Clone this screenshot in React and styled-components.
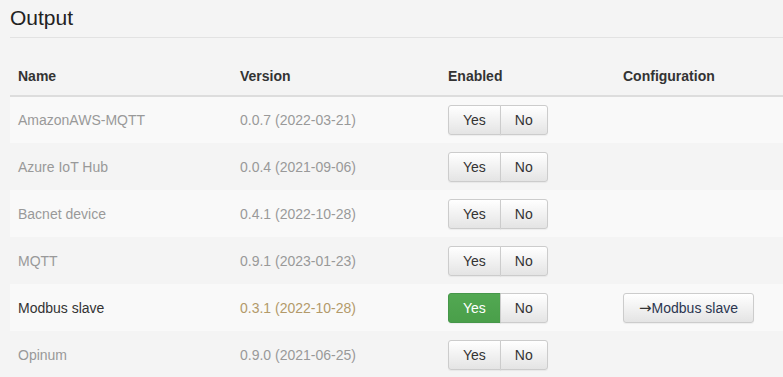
import React from "react";
import styled, { createGlobalStyle } from "styled-components";

const GlobalStyle = createGlobalStyle`
  body {
    margin: 0;
    background: #f4f4f4;
    font-family: "Liberation Sans", Arial, sans-serif;
    font-size: 14px;
    color: #333;
  }
  * {
    box-sizing: border-box;
  }
`;

const Page = styled.div`
  padding: 0 0 0 10px;
`;

const Title = styled.h2`
  margin: 0;
  padding: 6px 0 7px;
  font-size: 21px;
  font-weight: 400;
  line-height: 24px;
  color: #222;
  border-bottom: 1px solid #e2e2e2;
`;

const Table = styled.table`
  width: 100%;
  margin-top: 20px;
  border-collapse: collapse;
  table-layout: fixed;
`;

const Th = styled.th`
  text-align: left;
  padding: 8px 8px 9px;
  line-height: 20px;
  font-weight: 700;
  font-size: 14px;
  color: #333;
  border-bottom: 2px solid #dddddd;
  width: ${(p) => p.$w || "auto"};
`;

const Row = styled.tr`
  background: ${(p) => (p.$striped ? "#f9f9f9" : "transparent")};
  & + & td {
    border-top: 1px solid #dddddd;
  }
`;

const Td = styled.td`
  padding: 8px;
  line-height: 20px;
  height: 47px;
  vertical-align: middle;
  color: ${(p) => p.$color || "#999"};
`;

const Group = styled.div`
  display: inline-flex;
`;

const Btn = styled.button`
  height: 30px;
  padding: 0 14px;
  font-family: inherit;
  font-size: 14px;
  color: ${(p) => (p.$on ? "#fff" : "#333")};
  background: ${(p) =>
    p.$on
      ? "linear-gradient(#52a852, #4a9f4a)"
      : "linear-gradient(#ffffff, #e4e4e4)"};
  border: 1px solid ${(p) => (p.$on ? "#46974a" : "#cccccc")};
  box-shadow: 0 1px 1px rgba(0, 0, 0, 0.05);
  cursor: pointer;
  &:first-child {
    border-radius: 3px 0 0 3px;
  }
  &:last-child {
    border-radius: 0 3px 3px 0;
    margin-left: -1px;
  }
`;

const ConfigBtn = styled.button`
  height: 30px;
  width: 131px;
  padding: 0 6px;
  font-family: inherit;
  font-size: 14px;
  white-space: nowrap;
  color: #2b3650;
  background: linear-gradient(#ffffff, #e4e4e4);
  border: 1px solid #cccccc;
  border-radius: 3px;
  box-shadow: 0 1px 1px rgba(0, 0, 0, 0.05);
`;

const Arrow = styled.span`
  font-family: "DejaVu Sans", sans-serif;
  font-size: 15px;
  color: #333;
`;

const plugins = [
  { name: "AmazonAWS-MQTT", version: "0.0.7 (2022-03-21)", on: false },
  { name: "Azure IoT Hub", version: "0.0.4 (2021-09-06)", on: false },
  { name: "Bacnet device", version: "0.4.1 (2022-10-28)", on: false },
  { name: "MQTT", version: "0.9.1 (2023-01-23)", on: false },
  { name: "Modbus slave", version: "0.3.1 (2022-10-28)", on: true },
  { name: "Opinum", version: "0.9.0 (2021-06-25)", on: false },
];

export default function App() {
  return (
    <Page>
      <GlobalStyle />
      <Title>Output</Title>
      <Table>
        <thead>
          <tr>
            <Th $w="222px">Name</Th>
            <Th $w="208px">Version</Th>
            <Th $w="175px">Enabled</Th>
            <Th>Configuration</Th>
          </tr>
        </thead>
        <tbody>
          {plugins.map((p, i) => (
            <Row key={p.name} $striped={i % 2 === 0}>
              <Td $color={p.on ? "#333" : "#999"}>{p.name}</Td>
              <Td $color={p.on ? "#b39a6a" : "#999"}>{p.version}</Td>
              <Td>
                <Group>
                  <Btn $on={p.on}>Yes</Btn>
                  <Btn>No</Btn>
                </Group>
              </Td>
              <Td>
                {p.on && (
                  <ConfigBtn>
                    <Arrow>→</Arrow>Modbus slave
                  </ConfigBtn>
                )}
              </Td>
            </Row>
          ))}
        </tbody>
      </Table>
    </Page>
  );
}
